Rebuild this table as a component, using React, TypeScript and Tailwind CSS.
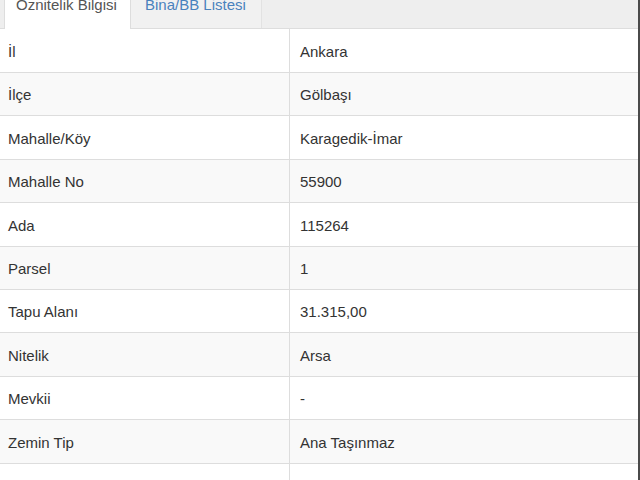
import React from "react";

const rows: [string, string, string][] = [
  ["İl", "Ankara", "h-[44px] bg-white"],
  ["İlçe", "Gölbaşı", "h-[43px] bg-[#f9f9f9]"],
  ["Mahalle/Köy", "Karagedik-İmar", "h-[44px] bg-white"],
  ["Mahalle No", "55900", "h-[43px] bg-[#f9f9f9]"],
  ["Ada", "115264", "h-[44px] bg-white"],
  ["Parsel", "1", "h-[43px] bg-[#f9f9f9]"],
  ["Tapu Alanı", "31.315,00", "h-[43px] bg-white"],
  ["Nitelik", "Arsa", "h-[44px] bg-[#f9f9f9]"],
  ["Mevkii", "-", "h-[43px] bg-white"],
  ["Zemin Tip", "Ana Taşınmaz", "h-[44px] bg-[#f9f9f9]"],
  ["Yüzölçüm", "", "h-[44px] bg-white"],
];

export default function App() {
  return (
    <div
      className="w-[640px] h-[480px] overflow-hidden bg-white border-r-2 border-[#4a4a4a] text-[#333]"
      style={{ fontFamily: '"Liberation Sans", Arial, sans-serif' }}
    >
      <div className="flex h-[29px] bg-[#eeeeee] border-b border-[#dddddd] overflow-visible">
        <div className="w-[4px]" />
        <div className="-mt-[13px] h-[42px] w-[127px] bg-white border-x border-[#dddddd] pl-[11px] pt-[8px] text-[15px] leading-[20px] text-[#555]">
          Öznitelik Bilgisi
        </div>
        <div className="-mt-[13px] h-[41px] w-[131px] bg-[#f1f1f1] border-r border-[#e2e2e2] pl-[14px] pt-[8px] text-[15px] leading-[20px] text-[#4a82bd]">
          Bina/BB Listesi
        </div>
      </div>
      <div className="flex flex-col">
        {rows.map(([k, v, cls], i) => (
          <div key={i} className={`flex border-b border-[#dddddd] ${cls}`}>
            <div className="w-[290px] flex items-center pl-[8px] pt-[3px] text-[15px] border-r border-[#dddddd]">
              {k}
            </div>
            <div className="flex-1 flex items-center pl-[10px] pt-[3px] text-[15px]">{v}</div>
          </div>
        ))}
      </div>
    </div>
  );
}
